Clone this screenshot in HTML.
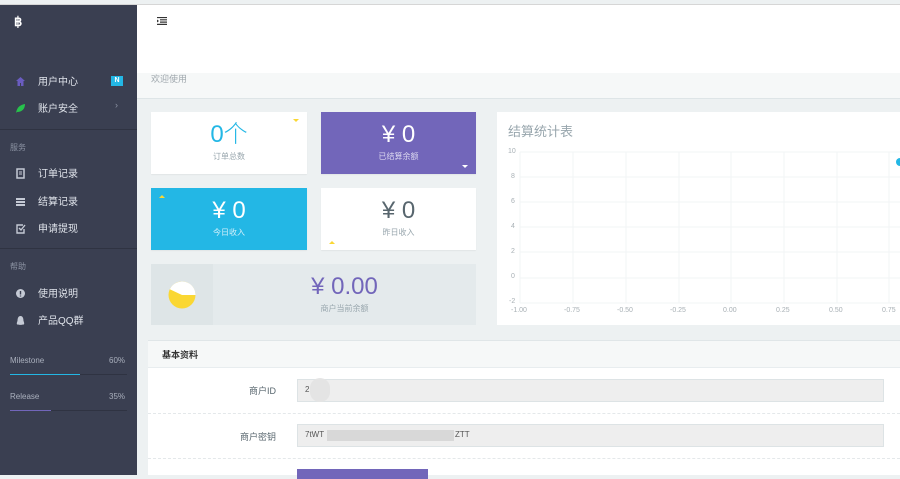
<!DOCTYPE html><html><head><meta charset="utf-8"><style>
*{box-sizing:border-box;margin:0;padding:0}
body{width:900px;height:475px;overflow:hidden;background:#edf1f2;font-family:"Liberation Sans","Noto Sans CJK SC",sans-serif;position:relative;font-size:10px}
.a{position:absolute}
#sb{left:0;top:5px;width:137px;height:470px;background:#3a3f51;color:#c5cad5}
.it{position:absolute;left:38px;font-size:10px;color:#dfe3ea;margin-top:-2px}
.ic{position:absolute;left:15px;width:11px;height:11px}
.hd{position:absolute;left:10px;font-size:8px;color:#8c93a3}
.dv{position:absolute;left:0;width:137px;height:1px;background:#2f3342}
.card{position:absolute;background:#fff;text-align:center;box-shadow:0 1px 1px rgba(0,0,0,.05)}
.num{font-size:24px;font-weight:300;line-height:28px;margin-top:9px}
.lb{font-size:8px;color:#98a6ad;margin-top:2px}
.tri{position:absolute;width:0;height:0;border-left:3px solid transparent;border-right:3px solid transparent}
.ax{position:absolute;font-size:7px;color:#a8b0b5}
</style></head><body>
<div class="a" style="left:0;top:4px;width:900px;height:1px;background:#d6d6d6"></div>
<div id="sb" class="a">
<div class="a" style="left:14px;top:9px;color:#fff;font-weight:bold;font-size:13px">&#3647;</div>
<svg class="ic" style="top:71px" viewBox="0 0 11 11"><path d="M5.5 1L1 5h1.5v5h2.5V7h1v3h2.5V5H10z" fill="#6a5cc0"/></svg>
<div class="it" style="top:70px">用户中心</div>
<div class="a" style="left:111px;top:71px;width:12px;height:10px;background:#23b7e5;color:#fff;font-size:7px;text-align:center;line-height:10px;font-weight:bold">N</div>
<svg class="ic" style="top:98px" viewBox="0 0 11 11"><path d="M1 10C2 4 5 2 10 1 10 6 7 9 2 9z" fill="#27c24c"/></svg>
<div class="it" style="top:97px">账户安全</div>
<div class="a" style="left:115px;top:95px;color:#8c93a3;font-size:9px">›</div>
<div class="dv" style="top:124px"></div>
<div class="hd" style="top:137px">服务</div>
<svg class="ic" style="top:163px" viewBox="0 0 11 11"><rect x="2" y="1" width="7" height="9" fill="none" stroke="#c5cad5" stroke-width="1.5"/><path d="M4 4h3M4 6h3" stroke="#c5cad5"/></svg>
<div class="it" style="top:162px">订单记录</div>
<svg class="ic" style="top:191px" viewBox="0 0 11 11"><path d="M1 2h9v2H1zM1 5h9v2H1zM1 8h9v2H1z" fill="#c5cad5"/></svg>
<div class="it" style="top:190px">结算记录</div>
<svg class="ic" style="top:218px" viewBox="0 0 11 11"><path d="M8 2H2v8h7V6" fill="none" stroke="#c5cad5" stroke-width="1.4"/><path d="M4 5l2 2 4-5" fill="none" stroke="#c5cad5" stroke-width="1.4"/></svg>
<div class="it" style="top:217px">申请提现</div>
<div class="dv" style="top:243px"></div>
<div class="hd" style="top:256px">帮助</div>
<svg class="ic" style="top:283px" viewBox="0 0 11 11"><circle cx="5.5" cy="5.5" r="4.5" fill="#c5cad5"/><path d="M5.5 3v3.5M5.5 7.5v1" stroke="#3a3f51" stroke-width="1.4"/></svg>
<div class="it" style="top:282px">使用说明</div>
<svg class="ic" style="top:310px" viewBox="0 0 11 11"><path d="M5.5 1C3 1 2.5 4 2.5 6 1.5 8 1.5 10 3 9.5 4 10 7 10 8 9.5 9.5 10 9.5 8 8.5 6 8.5 4 8 1 5.5 1z" fill="#c5cad5"/></svg>
<div class="it" style="top:309px">产品QQ群</div>
<div class="a" style="left:10px;top:351px;font-size:8px;color:#aab0bd">Milestone</div>
<div class="a" style="left:109px;top:351px;font-size:8px;color:#aab0bd">60%</div>
<div class="a" style="left:10px;top:369px;width:117px;height:1px;background:#2f3342"><div style="width:70px;height:1px;background:#23b7e5"></div></div>
<div class="a" style="left:10px;top:387px;font-size:8px;color:#aab0bd">Release</div>
<div class="a" style="left:109px;top:387px;font-size:8px;color:#aab0bd">35%</div>
<div class="a" style="left:10px;top:405px;width:117px;height:1px;background:#2f3342"><div style="width:41px;height:1px;background:#7266ba"></div></div>
</div>
<div class="a" style="left:137px;top:5px;width:763px;height:68px;background:#fff"></div>
<svg class="a" style="left:157px;top:17px" width="10" height="8" viewBox="0 0 10 8"><path d="M0 0.5h10M3 2.8h7M3 5.1h7M0 7.4h10" stroke="#333" stroke-width="1.2"/><path d="M0 2.5L2 4 0 5.5z" fill="#333"/></svg>
<div class="a" style="left:137px;top:73px;width:763px;height:26px;background:#f6f8f8;border-bottom:1px solid #dee5e7"></div>
<div class="a" style="left:151px;top:72px;font-size:9px;color:#a0a8ae">欢迎使用</div>

<div class="card" style="left:151px;top:112px;width:156px;height:62px"><div class="num" style="color:#23b7e5">0个</div><div class="lb">订单总数</div><div class="tri" style="right:8px;top:7px;border-top:3px solid #fad733"></div></div>
<div class="card" style="left:321px;top:112px;width:155px;height:62px;background:#7266ba"><div class="num" style="color:#fff">¥ 0</div><div class="lb" style="color:#dcd8f0">已结算余额</div><div class="tri" style="right:8px;bottom:6px;border-top:3px solid #fff"></div></div>
<div class="card" style="left:151px;top:188px;width:156px;height:62px;background:#23b7e5"><div class="num" style="color:#fff">¥ 0</div><div class="lb" style="color:#d5f0fa">今日收入</div><div class="tri" style="left:8px;top:7px;border-bottom:3px solid #fad733"></div></div>
<div class="card" style="left:321px;top:188px;width:155px;height:62px"><div class="num" style="color:#58666e">¥ 0</div><div class="lb">昨日收入</div><div class="tri" style="left:8px;bottom:6px;border-bottom:3px solid #fad733"></div></div>
<div class="a" style="left:151px;top:264px;width:325px;height:61px;background:#e4eaec">
<div class="a" style="left:0;top:0;width:62px;height:61px;background:#dee5e7"></div>
<svg class="a" style="left:17px;top:17px" width="28" height="28" viewBox="0 0 28 28"><circle cx="14" cy="14" r="13.5" fill="#fad733"/><path d="M14 14L27.5 14A13.5 13.5 0 0 0 1.8 8.2z" fill="#fff"/></svg>
<div class="a" style="left:62px;width:263px;top:9px;text-align:center;font-size:24px;font-weight:300;color:#7266ba;line-height:28px">¥ 0.00</div>
<div class="a" style="left:62px;width:263px;top:39px;text-align:center;font-size:8px;color:#98a6ad">商户当前余额</div>
</div>

<div class="a" style="left:497px;top:112px;width:403px;height:213px;background:#fff"></div>
<div class="a" style="left:508px;top:121px;font-size:13px;color:#98a6ad">结算统计表</div>
<svg class="a" style="left:497px;top:112px" width="403" height="213">
<g stroke="#f2f4f5" stroke-width="1">
<path d="M23 40V191M76 40V191M129 40V191M182 40V191M234 40V191M287 40V191M340 40V191M392 40V191"/>
<path d="M23 40H403M23 65H403M23 90H403M23 115H403M23 140H403M23 166H403M23 191H403"/>
</g>
<circle cx="403" cy="50" r="4" fill="#23b7e5"/>
</svg>
<div class="ax" style="left:508px;top:148px">10</div><div class="ax" style="left:511px;top:173px">8</div><div class="ax" style="left:511px;top:198px">6</div><div class="ax" style="left:511px;top:223px">4</div><div class="ax" style="left:511px;top:248px">2</div><div class="ax" style="left:511px;top:273px">0</div><div class="ax" style="left:509px;top:298px">-2</div>
<div class="ax" style="left:511px;top:307px">-1.00</div><div class="ax" style="left:564px;top:307px">-0.75</div><div class="ax" style="left:617px;top:307px">-0.50</div><div class="ax" style="left:670px;top:307px">-0.25</div><div class="ax" style="left:723px;top:307px">0.00</div><div class="ax" style="left:776px;top:307px">0.25</div><div class="ax" style="left:829px;top:307px">0.50</div><div class="ax" style="left:882px;top:307px">0.75</div>

<div class="a" style="left:148px;top:340px;width:752px;height:135px;background:#fff;border-top:1px solid #e0e6e8"></div>
<div class="a" style="left:148px;top:341px;width:752px;height:27px;background:#f6f8f8;border-bottom:1px solid #e8edef"></div>
<div class="a" style="left:162px;top:348px;font-size:9px;color:#333;font-weight:bold">基本资料</div>
<div class="a" style="left:200px;top:384px;width:76px;text-align:right;font-size:9px;color:#58666e">商户ID</div>
<div class="a" style="left:297px;top:379px;width:587px;height:23px;background:#eeeeee;border:1px solid #dde3e5"></div>
<div class="a" style="left:305px;top:385px;font-size:8px;color:#555">2</div>
<div class="a" style="left:310px;top:378px;width:20px;height:24px;background:#e4e4e4;border-radius:10px"></div>
<div class="a" style="left:148px;top:413px;width:752px;border-top:1px dashed #e4e8ea"></div>
<div class="a" style="left:200px;top:430px;width:76px;text-align:right;font-size:9px;color:#58666e">商户密钥</div>
<div class="a" style="left:297px;top:424px;width:587px;height:23px;background:#eeeeee;border:1px solid #dde3e5"></div>
<div class="a" style="left:305px;top:430px;font-size:8px;color:#555">7tWT</div>
<div class="a" style="left:327px;top:430px;width:127px;height:11px;background:#d8d8d8"></div>
<div class="a" style="left:455px;top:430px;font-size:8px;color:#555">ZTT</div>
<div class="a" style="left:148px;top:458px;width:752px;border-top:1px dashed #e4e8ea"></div>
<div class="a" style="left:297px;top:469px;width:131px;height:10px;background:#7266ba"></div>
</body></html>
